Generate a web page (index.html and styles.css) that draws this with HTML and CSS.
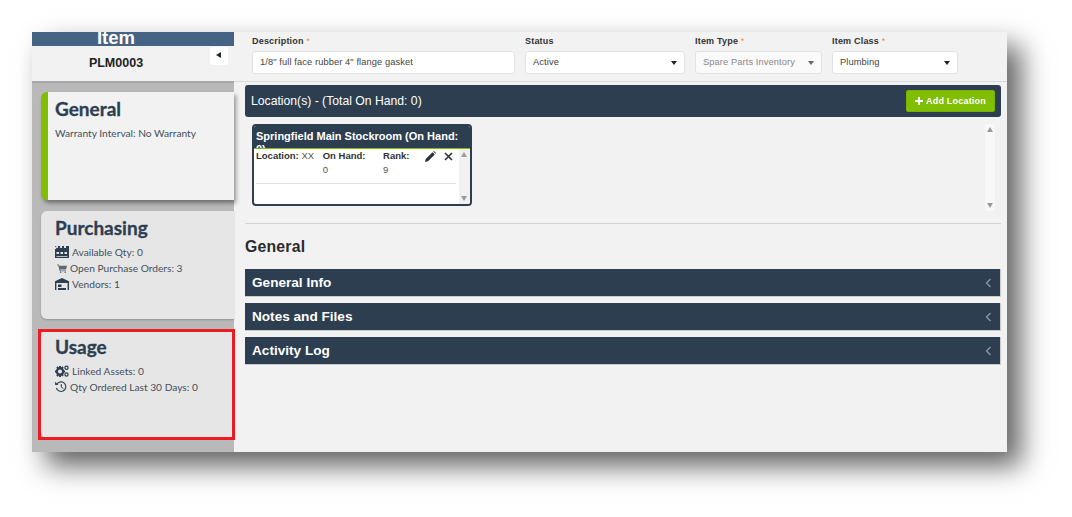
FILE: index.html
```html
<!DOCTYPE html>
<html lang="en">
<head>
<meta charset="utf-8">
<title>Item PLM0003</title>
<link rel="stylesheet" href="styles.css">
</head>
<body>
<div class="window">
  <aside class="sidebar">
    <div class="band"><span>Item</span></div>
    <div class="idrow">
      <span class="idtext">PLM0003</span>
      <button class="collapse"><svg width="6" height="6" viewBox="0 0 6 6"><path d="M5 0v6L0 3z" fill="#1c2a38"/></svg></button>
    </div>
    <div class="cards">
      <section class="card active">
        <h2>General</h2>
        <p class="line">Warranty Interval: No Warranty</p>
      </section>
      <section class="card">
        <h2>Purchasing</h2>
        <p class="line"><svg class="ic" width="14" height="12" viewBox="0 0 14 12"><path d="M0 0h1.200v3H14V0h-3v2H9V0H7v2H5V0H3v2H1.200z" fill="#2c3e50"/><path d="M0 3h14v9H0z" fill="#2c3e50"/><path d="M1.500 6h2.500v2H1.500zM5.500 6H8v2H5.500zM9.500 6H12v2H9.500zM1.500 10h11v.8h-11z" fill="#e6e6e6"/></svg>Available Qty: 0</p>
        <p class="line cart"><svg class="ic" width="10" height="9" viewBox="0 0 10 9"><path d="M0 .4h1.800l.5 1.300H10L9 5.500H3.100l.3 1H9v.8H2.700L1.200 1.200H0z" fill="#5c6873"/><circle cx="3.600" cy="8.200" r=".8" fill="#5c6873"/><circle cx="8.200" cy="8.200" r=".8" fill="#5c6873"/></svg>Open Purchase Orders: 3</p>
        <p class="line"><svg class="ic" width="14" height="12" viewBox="0 0 14 12"><path d="M0 3.200 7 0l7 3.200V12h-1.400V5H1.400v7H0z" fill="#2c3e50"/><path d="M3 6.500h3.500V9H3zM3 10h8v2H3z" fill="#2c3e50"/></svg>Vendors: 1</p>
      </section>
      <section class="card">
        <h2>Usage</h2>
        <p class="line"><svg class="ic" width="14" height="12" viewBox="0 0 14 12"><circle cx="5" cy="6.500" r="3.200" fill="none" stroke="#2c3e50" stroke-width="2.200"/><path d="M4 1h2v2H4zM4 10h2v2H4zM0 5.500h2v2H0zM8 5.500h2v2H8zM1.200 2.700l1.400-1.400 1.400 1.400-1.400 1.400zM6 10l1.400-1.400 1.400 1.400-1.400 1.400zM1.200 10.300 2.600 8.900 4 10.300l-1.400 1.400zM6 2.700l1.400-1.400 1.400 1.400-1.400 1.400z" fill="#2c3e50"/><circle cx="11.500" cy="2.800" r="1.600" fill="none" stroke="#2c3e50" stroke-width="1.200"/><circle cx="11.500" cy="9.500" r="1.600" fill="none" stroke="#2c3e50" stroke-width="1.200"/></svg>Linked Assets: 0</p>
        <p class="line"><svg class="ic hist" width="12" height="12" viewBox="0 0 12 12"><path d="M2 3a4.800 4.800 0 1 1-.6 4" fill="none" stroke="#2c3e50" stroke-width="1.100"/><path d="M0 .8 3.600 4H.2z" fill="#2c3e50"/><path d="M6.300 3v3.200l2 1.300" fill="none" stroke="#2c3e50"/></svg>Qty Ordered Last 30 Days: 0</p>
      </section>
    </div>
    <div class="highlight"></div>
  </aside>
  <main class="main">
    <form class="fields">
      <div class="field desc"><label>Description <i>*</i></label><div class="box">1/8" full face rubber 4" flange gasket</div></div>
      <div class="field status"><label>Status</label><div class="box select">Active<b class="caret"></b></div></div>
      <div class="field type"><label>Item Type <i>*</i></label><div class="box select off">Spare Parts Inventory<b class="caret"></b></div></div>
      <div class="field class"><label>Item Class <i>*</i></label><div class="box select">Plumbing<b class="caret"></b></div></div>
    </form>
    <div class="content">
      <div class="locbar">
        <span>Location(s) - (Total On Hand: 0)</span>
        <button class="add"><svg width="8" height="8" viewBox="0 0 8 8"><path d="M3.100 0h1.800v3.100H8v1.800H4.900V8H3.100V4.900H0V3.100h3.100z" fill="#fff"/></svg>Add Location</button>
      </div>
      <div class="locpanel">
        <article class="loccard">
          <header class="lochead">Springfield Main Stockroom (On Hand: 0)</header>
          <div class="locbody">
            <div class="locmain">
              <div class="locrow">
                <div class="col c1"><b>Location:</b> XX</div>
                <div class="col c2"><b>On Hand:</b><span>0</span></div>
                <div class="col c3"><b>Rank:</b><span>9</span></div>
                <div class="tools">
                  <span class="tool"><svg width="11" height="11" viewBox="0 0 11 11"><path d="M0 11l.7-3L7.500 1.200l2.300 2.300L3 10.300zM8.200.5 9 0l2 2-.5.8z" fill="#26333f"/></svg></span>
                  <span class="tool"><svg width="9" height="9" viewBox="0 0 9 9"><path d="M1 1l7 7M8 1 1 8" stroke="#26333f" stroke-width="1.600"/></svg></span>
                </div>
              </div>
              <hr class="locrule">
            </div>
            <div class="scroll inner"><em class="up"></em><em class="down"></em></div>
          </div>
        </article>
        <div class="scroll outer"><em class="up"></em><em class="down"></em></div>
      </div>
      <hr class="rule">
      <h3 class="heading">General</h3>
      <div class="acc"><span>General Info</span><svg width="7" height="10" viewBox="0 0 7 10"><path d="M5.500 1 1.500 5l4 4" fill="none" stroke="#8e98a3" stroke-width="1.300"/></svg></div>
      <div class="acc"><span>Notes and Files</span><svg width="7" height="10" viewBox="0 0 7 10"><path d="M5.500 1 1.500 5l4 4" fill="none" stroke="#8e98a3" stroke-width="1.300"/></svg></div>
      <div class="acc"><span>Activity Log</span><svg width="7" height="10" viewBox="0 0 7 10"><path d="M5.500 1 1.500 5l4 4" fill="none" stroke="#8e98a3" stroke-width="1.300"/></svg></div>
    </div>
  </main>
</div>
</body>
</html>
```
FILE: styles.css
```css
* { box-sizing: border-box; }
html, body { margin: 0; height: 100%; overflow: hidden; background: #fff; }
body { padding: 32px 0 0 32px; font-family: "Liberation Sans", Arial, sans-serif; }
.window {
  display: flex;
  width: 975px;
  height: 420px;
  background: #f2f2f2;
  box-shadow: 14px 14px 26px rgba(0, 0, 0, .62);
}
.sidebar { position: relative; width: 202px; flex: none; background: #b9b9b9; display: flex; flex-direction: column; }
.band { height: 14px; background: #456382; color: #fff; overflow: hidden; text-align: center; font-size: 18.500px; font-weight: bold; line-height: 11px; padding-right: 34px; }
.idrow { height: 37px; background: #f2f2f2; border-bottom: 2px solid #a8a8a8; display: flex; align-items: center; justify-content: center; position: relative; font-size: 12.500px; font-weight: bold; color: #222; padding: 0 34px 2px 0; }
.collapse { position: absolute; right: 6px; top: 1px; width: 18px; height: 18px; border: 0; padding: 0 0 3px; background: #fff; border-radius: 2px; display: flex; align-items: center; justify-content: center; }
.cards { display: flex; flex-direction: column; gap: 11px; padding: 9px 0 0 9px; font-family: Lato, sans-serif; }
.card { height: 108px; background: #e6e6e6; border-radius: 6px 0 0 6px; padding: 5px 0 0 14px; color: #44505c; box-shadow: 0 1px 2px rgba(0,0,0,.2); }
.card.active { background: #f2f2f2; border-left: 7px solid #7fbe00; padding-left: 7px; box-shadow: 2px 3px 4px rgba(0,0,0,.4); }
.card h2 { margin: 0 0 4px; font-size: 19px; line-height: 24px; font-weight: 700; color: #2c3e50; -webkit-text-stroke: .3px #2c3e50; }
.line { margin: 0; display: flex; align-items: center; gap: 3px; font-size: 10.200px; line-height: 16px; color: #44505c; white-space: nowrap; }
.cart { padding-left: 2px; }
.ic { flex: none; }
.highlight { position: absolute; left: 6px; top: 297px; width: 197px; height: 111px; border: 3px solid #ec1c24; }
.main { flex: 1; min-width: 0; display: flex; flex-direction: column; }
.fields { height: 50px; flex: none; border-bottom: 1px solid #d8d8d8; padding: 4px 0 0 18px; display: flex; }
.field label { display: block; font-size: 9px; font-weight: bold; color: #333; letter-spacing: .2px; line-height: 11px; margin-bottom: 4px; white-space: nowrap; }
.field label i { color: #f58a4b; font-style: normal; font-weight: normal; }
.desc { width: 273px; }
.status { width: 170px; }
.type { width: 137px; }
.class { width: 126px; }
.box { position: relative; height: 23px; background: #fff; border: 1px solid #e2e2e2; border-radius: 3px; font-size: 9.300px; line-height: 21px; color: #444; padding-left: 7px; white-space: nowrap; letter-spacing: .1px; }
.desc .box { width: 263px; }
.status .box { width: 160px; }
.type .box { width: 127px; }
.class .box { width: 126px; }
.box.off { background: #fafafa; color: #888; }
.caret { position: absolute; right: 7px; top: 9px; border: 3px solid transparent; border-top: 4px solid #222; border-bottom: 0; }
.off .caret { border-top-color: #666; }
.content { flex: 1; padding: 3px 6px 0 11px; display: flex; flex-direction: column; }
.locbar { height: 32px; flex: none; background: #2c3e50; border-radius: 3px; display: flex; align-items: center; justify-content: space-between; padding: 0 6px; color: #fff; font-size: 12.200px; }
.add { height: 22px; width: 89px; background: #7fbe00; border: 1px solid #76b000; border-radius: 2px; color: #fff; font: bold 9px "Liberation Sans", Arial, sans-serif; letter-spacing: .2px; padding: 0; display: flex; align-items: center; justify-content: center; gap: 3px; }
.locpanel { height: 106px; flex: none; padding: 7px 0 0 7px; display: flex; justify-content: space-between; margin-right: 6px; }
.loccard { width: 220px; height: 82px; border: 2px solid #2c3e50; border-radius: 4px; background: #fff; overflow: hidden; display: flex; flex-direction: column; }
.lochead { height: 23px; flex: none; overflow: hidden; background: #2c3e50; color: #fff; font-size: 11px; font-weight: bold; line-height: 13px; padding: 4px 2px 0; border-bottom: 1.500px solid #7fbe00; }
.locbody { flex: 1; display: flex; min-height: 0; }
.locmain { flex: 1; padding: 0 3px 0 2px; min-width: 0; }
.locrow { display: flex; font-size: 9.500px; line-height: 14px; color: #555; height: 34px; }
.locrow b { color: #333; }
.col span { display: block; }
.c1 { width: 67.500px; white-space: nowrap; }
.c2 { width: 61px; margin-left: 1px; }
.c3 { width: 40px; margin-left: 1px; }
.tools { display: flex; gap: 3px; padding-top: 2px; margin-left: 1px; }
.tool { width: 15px; height: 11px; background: #fff; display: flex; align-items: center; justify-content: center; }
.locrule { margin: 0; border: 0; border-top: 1px solid #e0e0e0; }
.scroll { position: relative; flex: none; width: 11px; background: #f1f1f1; }
.scroll.outer { width: 10px; background: #f8f8f8; height: 87px; }
.scroll em { position: absolute; left: 2px; border: 3.500px solid transparent; }
.scroll .up { top: 3px; border-top: 0; border-bottom: 5px solid #9a9a9a; }
.scroll .down { bottom: 3px; border-bottom: 0; border-top: 5px solid #9a9a9a; }
.rule { margin: 0; border: 0; border-top: 1px solid #d4d4d4; flex: none; }
.heading { margin: 14px 0 13px; font-size: 15.800px; line-height: 18px; font-weight: bold; color: #2b2b2b; letter-spacing: .2px; }
.acc { height: 28px; flex: none; margin-bottom: 6px; background: #2c3e50; border: 1px solid #c8ccd0; border-width: 0 1px 1px 0; display: flex; align-items: center; justify-content: space-between; padding: 0 8px 0 7px; color: #fff; font-size: 13.600px; font-weight: bold; }
```
